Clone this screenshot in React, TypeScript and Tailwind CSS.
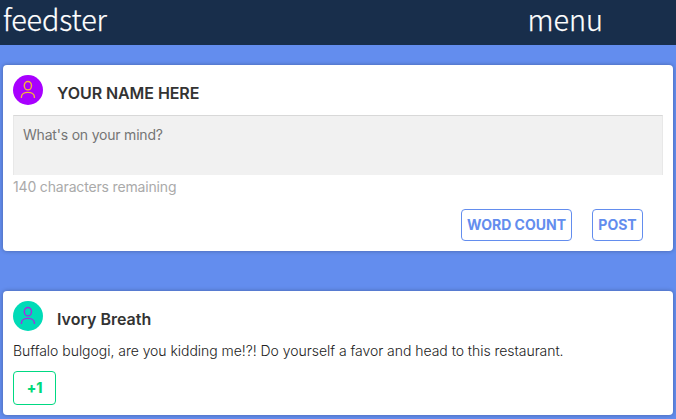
import React from "react";

function Avatar({ className }: { className: string }) {
  return (
    <span className={`block size-[30px] shrink-0 rounded-full ${className}`}>
      <svg viewBox="0 0 30 30" className="size-full" fill="none" stroke="currentColor" strokeWidth="1.4" strokeLinecap="round">
        <ellipse cx="14.9" cy="10.7" rx="3.6" ry="4.2" />
        <path d="M8.4 22.4v-.5c0-2.9 3-4.5 6.5-4.5s6.5 1.6 6.5 4.5v.5" />
      </svg>
    </span>
  );
}

function Card({ className, children }: { className: string; children: React.ReactNode }) {
  return (
    <section className={`rounded bg-white p-2.5 shadow-[0_0_4px_rgba(0,0,0,0.3)] ${className}`}>
      {children}
    </section>
  );
}

export default function App() {
  return (
    <div className="h-[419px] overflow-hidden bg-[#638dee] font-['Inter',sans-serif] text-[#333]">
      <header className="flex h-[45px] justify-between bg-[#182e4b] pr-[73px] pl-[3px] font-['Noto_Sans_CJK_JP',sans-serif] text-[28.8px] leading-[38px] font-light text-white [-webkit-text-stroke:0.25px_white]">
        <span className="tracking-[-0.1px]">feedster</span>
        <span>menu</span>
      </header>
      <main className="flex flex-col gap-10 px-[3px] pt-5">
        <Card className="h-[186px]">
          <div className="flex h-10 gap-[14px]">
            <Avatar className="bg-[#a800ff] text-[#f5b638]" />
            <h2 className="pt-[6px] text-base leading-6 font-semibold tracking-[-0.07px]">YOUR NAME HERE</h2>
          </div>
          <textarea
            className="block h-[60px] w-full resize-none border border-b-0 border-[#e8e8e8] border-t-[#d8d8d8] bg-[#f1f1f1] px-[9px] py-[9px] text-sm leading-5 tracking-[-0.2px] outline-none placeholder:text-[#757575]"
            placeholder="What's on your mind?"
          />
          <p className="pt-[2px] text-sm leading-5 tracking-[-0.16px] text-[#aaa]">140 characters remaining</p>
          <div className="flex justify-end gap-5 pt-3 pr-5">
            <button className="h-8 w-[111px] rounded border border-[#638dee] text-sm font-bold whitespace-nowrap text-[#638dee]">WORD COUNT</button>
            <button className="h-8 w-[51px] rounded border border-[#638dee] text-sm font-bold text-[#638dee]">POST</button>
          </div>
        </Card>
        <Card className="h-[124px]">
          <div className="flex h-10 gap-[14px]">
            <Avatar className="bg-[#00dbb7] text-[#a52be0]" />
            <h2 className="pt-[6px] text-base leading-6 font-semibold">Ivory Breath</h2>
          </div>
          <p className="text-sm leading-5 font-light tracking-[-0.035px] whitespace-nowrap text-[#222]">Buffalo bulgogi, are you kidding me!?! Do yourself a favor and head to this restaurant.</p>
          <button className="mt-[10px] block h-[34px] w-[43px] rounded border border-[#00d982] text-sm font-extrabold tracking-[-0.2px] text-[#00d97a]">+1</button>
        </Card>
      </main>
    </div>
  );
}
